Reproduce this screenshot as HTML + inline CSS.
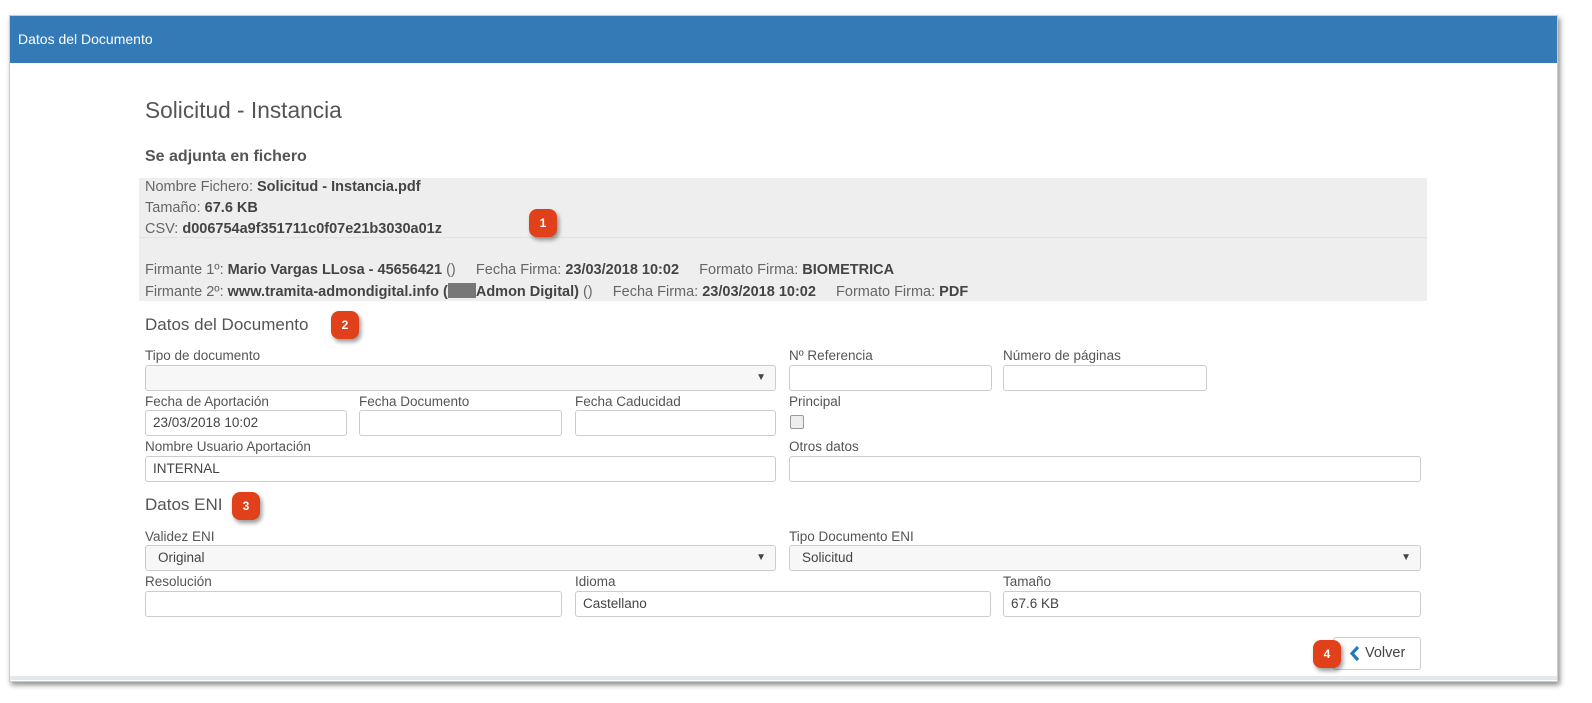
<!DOCTYPE html>
<html><head><meta charset="utf-8"><style>
body{margin:0;width:1592px;height:703px;background:#fff;font-family:"Liberation Sans",sans-serif;color:#555;position:relative;overflow:hidden}
.frame{position:absolute;left:9px;top:15px;width:1547px;height:665px;border:1px solid #ccc;box-shadow:2px 3px 5px rgba(0,0,0,.45);background:#fff}
.hdr{position:absolute;left:10px;top:16px;width:1547px;height:47px;background:#337ab7;color:#fff;font-size:14px;line-height:47px;padding-left:8px;box-sizing:border-box}
.bot{position:absolute;left:10px;top:676px;width:1547px;height:4px;background:#e3e8ee}
.a{position:absolute;white-space:nowrap}
.lbl{font-size:13.5px;color:#555}
.in{position:absolute;height:26px;border:1px solid #ccc;border-radius:3px;box-sizing:border-box;background:#fff;font-size:13.5px;line-height:24px;padding-left:7px;color:#444}
.sel{background:#f7f7f7;padding-left:12px}
.sel:after{content:"▼";position:absolute;right:9px;top:0;font-size:10px;color:#444}
.gray{position:absolute;left:139px;top:178px;width:1288px;height:123px;background:#eee}
.g{font-size:14.5px;color:#666}
.g b{color:#444;font-weight:bold}
.badge{position:absolute;width:28px;height:28px;border-radius:8px;background:#e0401a;color:#fff;font-size:12px;font-weight:bold;text-align:center;line-height:28px;box-shadow:2px 3px 4px rgba(0,0,0,.4)}
h3{margin:0;font-weight:normal;font-size:17px;color:#555}
</style></head><body>
<div class="frame"></div>
<div class="hdr">Datos del Documento</div>
<div class="bot"></div>
<div class="a" style="left:145px;top:97px;font-size:22.7px;color:#555">Solicitud - Instancia</div>
<div class="a" style="left:145px;top:148px;font-size:16px;font-weight:bold;color:#555">Se adjunta en fichero</div>
<div class="gray"></div>
<div style="position:absolute;left:139px;top:237px;width:1288px;height:1px;background:#e2e2e2"></div>
<div class="a g" style="left:145px;top:179px">Nombre Fichero: <b>Solicitud - Instancia.pdf</b></div>
<div class="a g" style="left:145px;top:200px">Tamaño: <b>67.6 KB</b></div>
<div class="a g" style="left:145px;top:221px">CSV: <b>d006754a9f351711c0f07e21b3030a01z</b></div>
<div class="a g" style="left:145px;top:262px">Firmante 1º: <b>Mario Vargas LLosa - 45656421</b> ()&nbsp;&nbsp;&nbsp;&nbsp;&nbsp;Fecha Firma: <b>23/03/2018 10:02</b>&nbsp;&nbsp;&nbsp;&nbsp;&nbsp;Formato Firma: <b>BIOMETRICA</b></div>
<div class="a g" style="left:145px;top:283px">Firmante 2º: <b>www.tramita-admondigital.info (<span style="display:inline-block;width:28px;height:15px;background:#777;vertical-align:-2px"></span>Admon Digital)</b> ()&nbsp;&nbsp;&nbsp;&nbsp;&nbsp;Fecha Firma: <b>23/03/2018 10:02</b>&nbsp;&nbsp;&nbsp;&nbsp;&nbsp;Formato Firma: <b>PDF</b></div>
<div class="badge" style="left:529px;top:209px">1</div>
<h3 class="a" style="left:145px;top:315px">Datos del Documento</h3>
<div class="badge" style="left:331px;top:311px">2</div>
<div class="a lbl" style="left:145px;top:348px">Tipo de documento</div>
<div class="in sel" style="left:145px;top:365px;width:631px"></div>
<div class="a lbl" style="left:789px;top:348px">Nº Referencia</div>
<div class="in" style="left:789px;top:365px;width:203px"></div>
<div class="a lbl" style="left:1003px;top:348px">Número de páginas</div>
<div class="in" style="left:1003px;top:365px;width:204px"></div>
<div class="a lbl" style="left:145px;top:394px">Fecha de Aportación</div>
<div class="in" style="left:145px;top:410px;width:202px">23/03/2018 10:02</div>
<div class="a lbl" style="left:359px;top:394px">Fecha Documento</div>
<div class="in" style="left:359px;top:410px;width:203px"></div>
<div class="a lbl" style="left:575px;top:394px">Fecha Caducidad</div>
<div class="in" style="left:575px;top:410px;width:201px"></div>
<div class="a lbl" style="left:789px;top:394px">Principal</div>
<div style="position:absolute;left:790px;top:415px;width:12px;height:12px;border:1px solid #999;border-radius:2px;background:#eee"></div>
<div class="a lbl" style="left:145px;top:439px">Nombre Usuario Aportación</div>
<div class="in" style="left:145px;top:456px;width:631px">INTERNAL</div>
<div class="a lbl" style="left:789px;top:439px">Otros datos</div>
<div class="in" style="left:789px;top:456px;width:632px"></div>
<h3 class="a" style="left:145px;top:495px">Datos ENI</h3>
<div class="badge" style="left:232px;top:492px">3</div>
<div class="a lbl" style="left:145px;top:529px">Validez ENI</div>
<div class="in sel" style="left:145px;top:545px;width:631px">Original</div>
<div class="a lbl" style="left:789px;top:529px">Tipo Documento ENI</div>
<div class="in sel" style="left:789px;top:545px;width:632px">Solicitud</div>
<div class="a lbl" style="left:145px;top:574px">Resolución</div>
<div class="in" style="left:145px;top:591px;width:417px"></div>
<div class="a lbl" style="left:575px;top:574px">Idioma</div>
<div class="in" style="left:575px;top:591px;width:416px">Castellano</div>
<div class="a lbl" style="left:1003px;top:574px">Tamaño</div>
<div class="in" style="left:1003px;top:591px;width:418px">67.6 KB</div>
<div class="in" style="left:1333px;top:637px;width:88px;height:33px;line-height:31px;font-size:14.5px;padding-left:31px;color:#444">Volver</div>
<svg style="position:absolute;left:1349px;top:645px" width="12" height="17"><path d="M9 2 L3 8.5 L9 15" stroke="#1f7bc0" stroke-width="3.2" fill="none"/></svg>
<div class="badge" style="left:1313px;top:640px">4</div>
</body></html>
